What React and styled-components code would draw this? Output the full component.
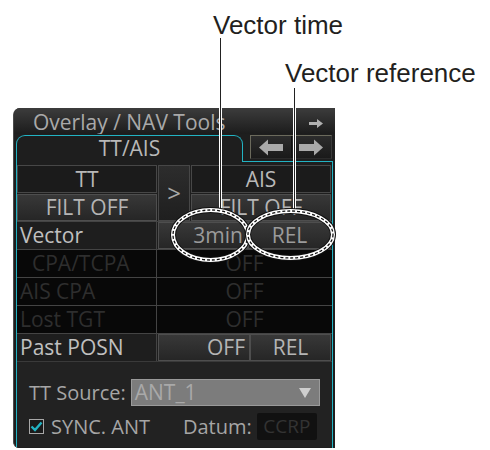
import React from 'react';
import styled, { createGlobalStyle } from 'styled-components';

const CYAN = '#22b3c3';
const UI_FONT = `'Open Sans', 'Noto Sans', sans-serif`;

const GlobalStyle = createGlobalStyle`
  body {
    margin: 0;
    background: #fff;
  }
`;

const Page = styled.div`
  position: relative;
  width: 490px;
  height: 450px;
  overflow: hidden;
  background: #fff;
`;

const Callouts = styled.div`
  height: 108px;
  padding-top: 12px;
  box-sizing: border-box;
  font-family: 'Liberation Sans', Arial, sans-serif;
  font-size: 26px;
  line-height: 26px;
  color: #231f20;
`;

const Callout = styled.div`
  margin-left: ${(p) => p.$x}px;
  margin-top: ${(p) => p.$gap || 0}px;
  white-space: nowrap;
`;

const Panel = styled.div`
  margin-left: 13px;
  width: 322px;
  font-family: ${UI_FONT};
  background: #1e1e1e;
  border-left: 1px solid #4a4a4a;
  border-radius: 7px 0 0 6px;
  overflow: hidden;
  box-sizing: border-box;
`;

const TitleBar = styled.div`
  height: 26px;
  display: flex;
  align-items: flex-start;
  justify-content: space-between;
  padding: 0 12px 0 19px;
  background: linear-gradient(#3c3c3c, #1c1c1c);
  color: #a9a9a9;
  font-size: 21px;
  line-height: 28px;
  overflow: hidden;
`;

const TitleArrow = styled.svg`
  margin-top: 11px;
`;

const TabRow = styled.div`
  display: flex;
  height: 28px;
  padding-left: 2px;
  padding-right: 2px;
`;

const Tab = styled.div`
  width: 227px;
  box-sizing: border-box;
  margin-top: 1px;
  border: 1.5px solid ${CYAN};
  border-bottom: none;
  border-radius: 9px 9px 0 0;
  text-align: center;
  color: #b8b8b8;
  font-size: 21px;
  line-height: 25px;
`;

const TabRest = styled.div`
  flex: 1;
  border-bottom: 1.5px solid ${CYAN};
  padding: 1px 1px 0 7px;
`;

const ArrowBox = styled.div`
  display: flex;
  height: 22px;
  border: 1px solid #6b6a5c;
  border-right-color: #3a3a3a;
  border-bottom-color: #2a2a2a;
  background: linear-gradient(#2c2c2c, #1a1a1a);
`;

const ArrowButton = styled.div`
  flex: 1;
  display: flex;
  align-items: center;
  justify-content: center;
  & + & {
    border-left: 1px solid #111;
  }
`;

const Body = styled.div`
  margin-left: 2px;
  margin-right: 2px;
  border-left: 1.5px solid ${CYAN};
  border-right: 1.5px solid ${CYAN};
  padding-top: 3px;
  height: 286px;
  box-sizing: border-box;
  background: #1e1e1e;
`;

const FilterGroup = styled.div`
  display: flex;
  height: 56px;
  gap: 1px;
  margin-right: 1px;
`;

const FilterColumn = styled.div`
  display: flex;
  flex-direction: column;
  width: ${(p) => p.$w}px;
  gap: 1px;
`;

const Cell = styled.div`
  display: flex;
  align-items: center;
  justify-content: center;
  height: ${(p) => p.$h || 28}px;
  box-sizing: border-box;
  border: 1px solid #474747;
  background: #1b1b1b;
  color: #b8b8b8;
  font-size: 21px;
  line-height: 1;
`;

const RaisedButton = styled(Cell)`
  justify-content: ${(p) => (p.$right ? 'flex-end' : 'center')};
  padding-right: ${(p) => (p.$right ? 4 : 0)}px;
  background: linear-gradient(#383838, #262626);
  border-color: #4e4e4e;
  color: ${(p) => (p.$dim ? '#9b9b9b' : '#b5b5b5')};
`;

const ChevronCell = styled(Cell)`
  width: 32px;
  height: 56px;
  font-size: 24px;
  color: #a8a8a8;
  background: linear-gradient(#2d2d2d, #1f1f1f);
`;

const SettingRow = styled.div`
  display: flex;
  height: 28px;
  box-sizing: border-box;
  border-top: 1px solid #444;
  background: ${(p) => (p.$disabled ? '#080808' : '#1e1e1e')};
  color: ${(p) => (p.$disabled ? '#2e2e2e' : '#c0c0c0')};
  font-size: 21px;
  line-height: 27px;
`;

const RowLabel = styled.div`
  width: 140px;
  box-sizing: border-box;
  padding-left: ${(p) => (p.$indent ? 15 : 3)}px;
  border-right: 1px solid #444;
  white-space: nowrap;
`;

const RowValues = styled.div`
  flex: 1;
  display: flex;
  justify-content: ${(p) => (p.$center ? 'center' : 'flex-start')};
  padding: ${(p) => (p.$center ? 0 : '0 1px 0 1px')};
`;

const ValueButton = styled(RaisedButton)`
  width: ${(p) => p.$w}px;
  height: 27px;
`;

const Footer = styled.div`
  height: 86px;
  padding: 17px 0 0 12px;
  box-sizing: border-box;
  border-top: 1px solid #3a3a3a;
  background: #222;
  color: #a6a6a6;
  font-size: 20px;
  line-height: 1;
`;

const FooterRow = styled.div`
  display: flex;
  align-items: center;
  height: 27px;
  margin-bottom: 7px;
`;

const FieldLabel = styled.span`
  margin-right: ${(p) => p.$gap || 0}px;
  white-space: nowrap;
`;

const Dropdown = styled.div`
  display: flex;
  align-items: center;
  justify-content: space-between;
  width: 189px;
  height: 27px;
  box-sizing: border-box;
  padding: 0 8px 0 3px;
  border: 1px solid #9a9a9a;
  background: #7c7c7c;
  color: #a9a9a9;
  font-size: 21px;
`;

const Checkbox = styled.div`
  width: 15px;
  height: 15px;
  box-sizing: border-box;
  margin-right: 7px;
  border: 1px solid #a8a8a8;
  background: #1a1a1a;
  display: flex;
  align-items: center;
  justify-content: center;
`;

const DatumBox = styled.div`
  display: flex;
  align-items: center;
  justify-content: center;
  width: 60px;
  height: 27px;
  border-radius: 2px;
  background: #111;
  color: #333;
  font-size: 19px;
`;

const Overlay = styled.svg`
  position: absolute;
  left: 0;
  top: 0;
  pointer-events: none;
`;

const BlockArrow = ({ flip }) => (
  <svg width="26" height="17" viewBox="0 0 26 17">
    <path
      d="M1 8.5 L10 0.5 L10 5 L25 5 L25 12 L10 12 L10 16.5 Z"
      fill="#a9a9a9"
      transform={flip ? 'translate(26 0) scale(-1 1)' : undefined}
    />
  </svg>
);

const DashedRing = ({ cx, cy, rx, ry }) => (
  <g fill="none">
    <ellipse cx={cx} cy={cy} rx={rx} ry={ry} stroke="#111" strokeWidth="6" />
    <ellipse cx={cx} cy={cy} rx={rx} ry={ry} stroke="#fff" strokeWidth="4" />
    <ellipse cx={cx} cy={cy} rx={rx} ry={ry} stroke="#111" strokeWidth="1.3" strokeDasharray="3 2" />
  </g>
);

const Leader = ({ x, y1, y2 }) => (
  <g>
    <line x1={x} y1={y1} x2={x} y2={y2} stroke="#fff" strokeWidth="3" />
    <line x1={x} y1={y1} x2={x} y2={y2} stroke="#222" strokeWidth="1" />
  </g>
);

export default function App() {
  return (
    <Page>
      <GlobalStyle />
      <Callouts>
        <Callout $x={213}>Vector time</Callout>
        <Callout $x={285} $gap={22}>Vector reference</Callout>
      </Callouts>

      <Panel>
        <TitleBar>
          <span>Overlay / NAV Tools</span>
          <TitleArrow width="14" height="9" viewBox="0 0 14 9">
            <path d="M0 3 L8 3 L8 0 L14 4.5 L8 9 L8 6 L0 6 Z" fill="#b0b0b0" />
          </TitleArrow>
        </TitleBar>

        <TabRow>
          <Tab>TT/AIS</Tab>
          <TabRest>
            <ArrowBox>
              <ArrowButton>
                <BlockArrow />
              </ArrowButton>
              <ArrowButton>
                <BlockArrow flip />
              </ArrowButton>
            </ArrowBox>
          </TabRest>
        </TabRow>

        <Body>
          <FilterGroup>
            <FilterColumn $w={140}>
              <Cell $h={28}>TT</Cell>
              <RaisedButton $h={27}>FILT OFF</RaisedButton>
            </FilterColumn>
            <ChevronCell>&gt;</ChevronCell>
            <FilterColumn $w={140}>
              <Cell $h={28}>AIS</Cell>
              <RaisedButton $h={27}>FILT OFF</RaisedButton>
            </FilterColumn>
          </FilterGroup>

          <SettingRow>
            <RowLabel>Vector</RowLabel>
            <RowValues>
              <ValueButton $w={90} $right $dim>3min</ValueButton>
              <ValueButton $w={83} $dim>REL</ValueButton>
            </RowValues>
          </SettingRow>
          <SettingRow $disabled>
            <RowLabel $indent>CPA/TCPA</RowLabel>
            <RowValues $center>OFF</RowValues>
          </SettingRow>
          <SettingRow $disabled>
            <RowLabel>AIS CPA</RowLabel>
            <RowValues $center>OFF</RowValues>
          </SettingRow>
          <SettingRow $disabled>
            <RowLabel>Lost TGT</RowLabel>
            <RowValues $center>OFF</RowValues>
          </SettingRow>
          <SettingRow>
            <RowLabel>Past POSN</RowLabel>
            <RowValues>
              <ValueButton $w={92} $right>OFF</ValueButton>
              <ValueButton $w={81}>REL</ValueButton>
            </RowValues>
          </SettingRow>

          <Footer>
            <FooterRow>
              <FieldLabel $gap={5}>TT Source:</FieldLabel>
              <Dropdown>
                <span>ANT_1</span>
                <svg width="12" height="10" viewBox="0 0 12 10">
                  <path d="M0 0 L12 0 L6 10 Z" fill="#cfcfcf" />
                </svg>
              </Dropdown>
            </FooterRow>
            <FooterRow>
              <Checkbox>
                <svg width="13" height="11" viewBox="0 0 13 11">
                  <path d="M1.5 5.5 L5 9 L11.5 1.5" stroke={CYAN} strokeWidth="2.4" fill="none" />
                </svg>
              </Checkbox>
              <FieldLabel $gap={33}>SYNC. ANT</FieldLabel>
              <FieldLabel $gap={5}>Datum:</FieldLabel>
              <DatumBox>CCRP</DatumBox>
            </FooterRow>
          </Footer>
        </Body>
      </Panel>

      <Overlay width="490" height="450" viewBox="0 0 490 450">
        <Leader x={220.5} y1={38} y2={211} />
        <Leader x={294.5} y1={88} y2={212} />
        <DashedRing cx={210.5} cy={235} rx={37.5} ry={25} />
        <DashedRing cx={290.5} cy={234.5} rx={42.5} ry={23.5} />
      </Overlay>
    </Page>
  );
}
